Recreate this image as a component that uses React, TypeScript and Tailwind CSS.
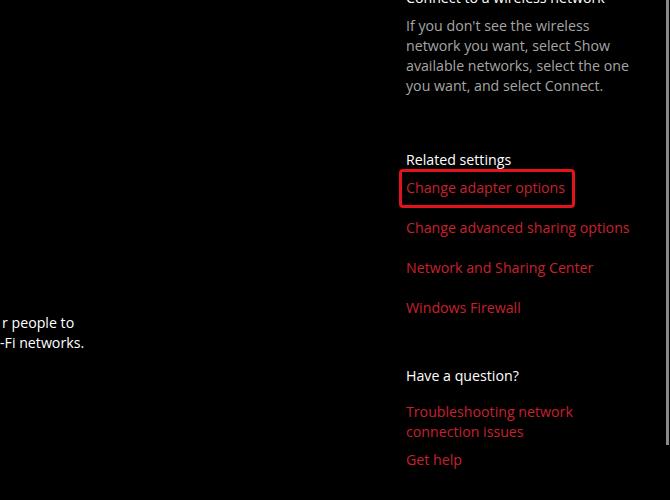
import React from "react";

const font = { fontFamily: '"Segoe UI", "Open Sans", "Noto Sans", sans-serif' };

export default function App() {
  return (
    <div
      className="w-[670px] h-[500px] bg-black overflow-hidden flex text-[14.2px] leading-[20px]"
      style={font}
    >
      <div className="w-[406px] shrink-0 pt-[313px] text-white">
        <div className="pl-[2px]">r people to</div>
        <div>-Fi networks.</div>
      </div>
      <div className="flex-1 flex flex-col mt-[-12px]">
        <div className="text-white whitespace-nowrap">Connect to a wireless network</div>
        <div className="mt-[8px] text-[#a6a6a6]">
          If you don't see the wireless
          <br />
          network you want, select Show
          <br />
          available networks, select the one
          <br />
          you want, and select Connect.
        </div>
        <div className="mt-[54px] text-white">Related settings</div>
        <div className="mt-[8px]">
          <span className="relative inline-block text-[#c8212e]">
            Change adapter options
            <span className="absolute left-[-7px] right-[-10px] top-[-9px] bottom-[-10px] border-[3px] border-[#e3121b] rounded-[4px]" />
          </span>
        </div>
        <div className="mt-[20px] text-[#c8212e]">Change advanced sharing options</div>
        <div className="mt-[20px] text-[#c8212e]">Network and Sharing Center</div>
        <div className="mt-[20px] text-[#c8212e]">Windows Firewall</div>
        <div className="mt-[48px] text-white">Have a question?</div>
        <div className="mt-[16px] text-[#c8212e]">
          Troubleshooting network
          <br />
          connection issues
        </div>
        <div className="mt-[8px] text-[#c8212e]">Get help</div>
      </div>
      <div className="w-[3px] h-[445px] bg-[#8a8a8a] mr-[1px] shrink-0" />
    </div>
  );
}
